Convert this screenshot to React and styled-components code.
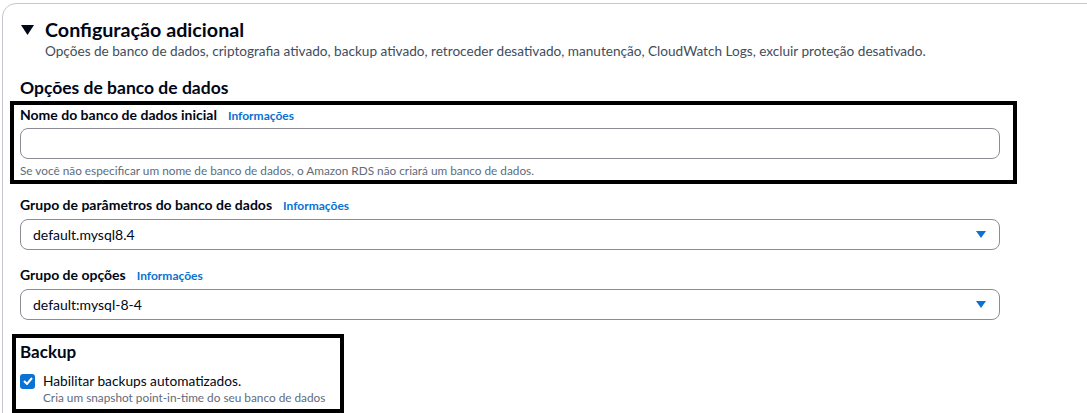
import React from "react";
import styled, { createGlobalStyle } from "styled-components";

const Global = createGlobalStyle`
  html, body { margin: 0; padding: 0; background: #ffffff; overflow: hidden; }
  body { font-family: "Lato", "Noto Sans", sans-serif; color: #000716; }
`;

const Card = styled.section`
  margin: 3px 0 0 2px;
  width: 1200px;
  min-height: 440px;
  border: 1px solid #c6c6cd;
  border-radius: 14px 0 0 0;
  padding: 14px 0 0 17px;
  box-sizing: border-box;
`;

const Column = styled.div`
  width: 980px;
  display: flex;
  flex-direction: column;
`;

const Header = styled.div`
  display: grid;
  grid-template-columns: 25px 1fr;
  align-items: center;
`;

const Caret = styled.svg`
  width: 13px;
  height: 10px;
  margin-left: 1px;
`;

const Title = styled.h2`
  margin: 0;
  font-size: 19.7px;
  line-height: 24px;
  font-weight: 700;
`;

const Summary = styled.p`
  grid-column: 2;
  margin: 0;
  font-size: 13.6px;
  line-height: 18px;
  color: #414d5c;
`;

const SectionTitle = styled.h3`
  margin: ${(p) => p.$mt ?? 0}px 0 0 0;
  font-size: ${(p) => p.$size ?? 17.5}px;
  line-height: 22px;
  font-weight: 700;
`;

const Highlight = styled.div`
  border: 4px solid #000000;
  margin: ${(p) => p.$m};
  padding: ${(p) => p.$p};
  width: ${(p) => p.$w || "auto"};
  box-sizing: border-box;
  display: flex;
  flex-direction: column;
`;

const Field = styled.div`
  display: flex;
  flex-direction: column;
  margin-top: ${(p) => p.$mt ?? 0}px;
`;

const LabelRow = styled.div`
  display: flex;
  align-items: baseline;
  gap: 11px;
  font-size: 14px;
  line-height: 18px;
  font-weight: 700;
`;

const Info = styled.a`
  font-size: 12px;
  font-weight: 700;
  color: #0972d3;
  text-decoration: none;
`;

const InputBox = styled.div`
  margin-top: ${(p) => p.$mt ?? 4}px;
  height: 31px;
  border: 1px solid #8c8c94;
  border-radius: 8px;
  box-sizing: border-box;
  display: flex;
  align-items: center;
  justify-content: space-between;
  padding: 0 13px 0 12px;
  font-size: 14px;
  color: #000716;
`;

const Hint = styled.div`
  margin-top: ${(p) => p.$mt ?? 4}px;
  font-size: 11.8px;
  line-height: 16px;
  color: #5f6b7a;
`;

const DropArrow = styled.svg`
  width: 10px;
  height: 7px;
`;

const CheckRow = styled.div`
  display: grid;
  grid-template-columns: 23px auto;
  align-items: center;
  margin-top: 9px;
`;

const Box = styled.span`
  width: 15px;
  height: 15px;
  border-radius: 3px;
  background: #0972d3;
  display: flex;
  align-items: center;
  justify-content: center;
`;

const CheckText = styled.span`
  font-size: 13.7px;
  line-height: 18px;
`;

const Select = ({ value }) => (
  <InputBox>
    <span>{value}</span>
    <DropArrow viewBox="0 0 10 7">
      <path d="M0 0 H10 L5 7 Z" fill="#0972d3" />
    </DropArrow>
  </InputBox>
);

export default function App() {
  return (
    <>
      <Global />
      <Card>
        <Column>
          <Header>
            <Caret viewBox="0 0 13 10">
              <path d="M0 0 H13 L6.5 10 Z" fill="#000716" />
            </Caret>
            <Title>Configuração adicional</Title>
            <Summary>
              Opções de banco de dados, criptografia ativado, backup ativado, retroceder desativado, manutenção,
              CloudWatch Logs, excluir proteção desativado.
            </Summary>
          </Header>

          <SectionTitle $mt={17}>Opções de banco de dados</SectionTitle>

          <Highlight $m="2px -17px 0 -10px" $p="1px 13px 1px 6px">
            <LabelRow>
              Nome do banco de dados inicial <Info>Informações</Info>
            </LabelRow>
            <InputBox $mt={3} />
            <Hint>Se você não especificar um nome de banco de dados, o Amazon RDS não criará um banco de dados.</Hint>
          </Highlight>

          <Field $mt={12}>
            <LabelRow>
              Grupo de parâmetros do banco de dados <Info>Informações</Info>
            </LabelRow>
            <Select value="default.mysql8.4" />
          </Field>

          <Field $mt={16}>
            <LabelRow>
              Grupo de opções <Info>Informações</Info>
            </LabelRow>
            <Select value="default:mysql-8-4" />
          </Field>

          <Highlight $m="14px 0 0 -8px" $p="3px 0 3px 4px" $w="332px">
            <SectionTitle $size={17}>Backup</SectionTitle>
            <CheckRow>
              <Box>
                <svg width="10" height="8" viewBox="0 0 10 8">
                  <path d="M1 4 L4 7 L9 1" stroke="#fff" strokeWidth="2" fill="none" />
                </svg>
              </Box>
              <CheckText>Habilitar backups automatizados.</CheckText>
              <span />
              <Hint $mt={0}>Cria um snapshot point-in-time do seu banco de dados</Hint>
            </CheckRow>
          </Highlight>
        </Column>
      </Card>
    </>
  );
}
